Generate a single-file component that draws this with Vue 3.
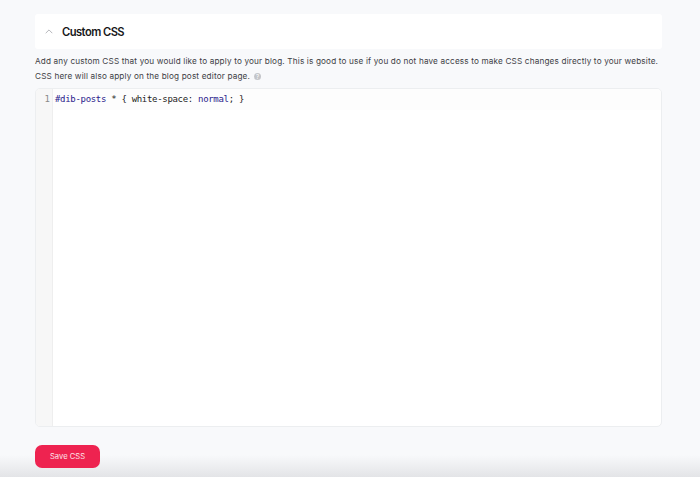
<template>
  <div class="page">
    <section class="panel">
      <header class="head">
        <svg class="chev" width="8" height="5" viewBox="0 0 8 5" fill="none"><path d="M0.7 4.2 L4 0.9 L7.3 4.2" stroke="#b5b7bb" stroke-width="1"/></svg>
        <h2 class="title">Custom CSS</h2>
      </header>
      <p class="desc">Add any custom CSS that you would like to apply to your blog. This is good to use if you do not have access to make CSS changes directly to your website.<br>CSS here will also apply on the blog post editor page.<span class="help">?</span></p>
      <div class="editor">
        <div class="gutter"><span class="num">1</span></div>
        <div class="code">
          <div class="line"><span class="id">#dib-posts</span> * { white-space: <span class="id">normal</span>; }</div>
        </div>
      </div>
      <button class="save">Save CSS</button>
    </section>
    <div class="fade"></div>
  </div>
</template>

<script setup>
</script>

<style>
html, body { margin: 0; background: #f8f9fb; }
</style>

<style scoped>
.page {
  height: 477px;
  overflow: hidden;
  background: #f8f9fb;
  position: relative;
  font-family: Inter, "Liberation Sans", sans-serif;
}
.panel {
  padding: 14px 38px 0 35px;
  display: flex;
  flex-direction: column;
}
.head {
  height: 35px;
  background: #fff;
  border-radius: 3px;
  display: flex;
  align-items: center;
  padding-left: 10px;
}
.chev { margin-right: 9px; }
.title {
  margin: 0;
  font-size: 11.2px;
  font-weight: 600;
  color: #17181a;
  letter-spacing: -0.55px;
}
.desc {
  margin: 5px 0 0;
  font-size: 8.2px;
  line-height: 15px;
  color: #3e4045;
  letter-spacing: 0.155px;
  white-space: nowrap;
}
.help {
  display: inline-block;
  width: 7px;
  height: 7px;
  margin-left: 4px;
  border-radius: 50%;
  background: #c3c5c9;
  color: #fff;
  font-size: 6px;
  line-height: 7px;
  text-align: center;
  letter-spacing: 0;
}
.editor {
  margin-top: 4px;
  height: 337px;
  display: flex;
  background: #fff;
  border: 1px solid #eceef0;
  border-radius: 5px;
  overflow: hidden;
}
.gutter {
  width: 16px;
  background: #f7f7f7;
  border-right: 1px solid #eeeeee;
  text-align: right;
  font-family: "DejaVu Sans Mono", monospace;
  font-size: 9px;
  line-height: 20px;
  color: #8a8a8a;
}
.num { padding-right: 2px; }
.code { flex: 1; }
.line {
  height: 21px;
  line-height: 20px;
  padding-left: 2px;
  background: #fdfdfd;
  font-family: "DejaVu Sans Mono", monospace;
  font-size: 9px;
  letter-spacing: -0.31px;
  color: #1c1c1c;
}
.id { color: #2a1a8c; }
.save {
  margin-top: 18px;
  width: 65px;
  height: 23px;
  border: none;
  border-radius: 7px;
  background: #ee2350;
  color: #fde4ea;
  font-family: inherit;
  font-size: 7.6px;
  padding: 0;
  position: relative;
  z-index: 1;
}
.fade {
  position: absolute;
  left: 0;
  right: 0;
  bottom: 0;
  height: 22px;
  background: linear-gradient(to bottom, rgba(225,226,229,0), rgba(225,226,229,0.9));
  pointer-events: none;
}
</style>
